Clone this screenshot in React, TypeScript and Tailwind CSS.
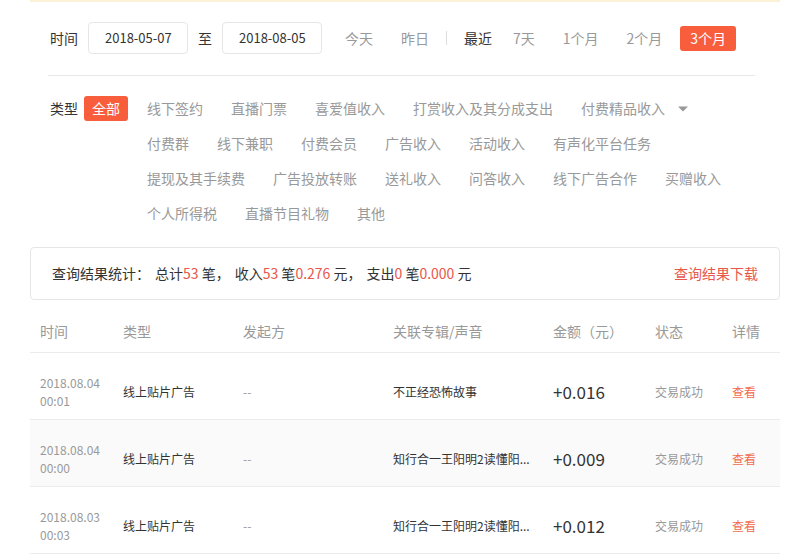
import { useState } from "react";

const FONT = { fontFamily: '"Noto Sans CJK SC", "Noto Sans", sans-serif' };

const TYPE_ROWS = [
  ["线下签约", "直播门票", "喜爱值收入", "打赏收入及其分成支出", "付费精品收入"],
  ["付费群", "线下兼职", "付费会员", "广告收入", "活动收入", "有声化平台任务"],
  ["提现及其手续费", "广告投放转账", "送礼收入", "问答收入", "线下广告合作", "买赠收入"],
  ["个人所得税", "直播节目礼物", "其他"],
];

const ROWS = [
  { date: "2018.08.04", time: "00:01", type: "线上贴片广告", from: "--", album: "不正经恐怖故事", amount: "+0.016" },
  { date: "2018.08.04", time: "00:00", type: "线上贴片广告", from: "--", album: "知行合一王阳明2读懂阳...", amount: "+0.009" },
  { date: "2018.08.03", time: "00:03", type: "线上贴片广告", from: "--", album: "知行合一王阳明2读懂阳...", amount: "+0.012" },
];

const COLS = "grid grid-cols-[83px_120px_150px_160px_102px_77px_1fr] items-center pl-[10px]";

export default function App() {
  const [range, setRange] = useState("3个月");

  return (
    <div className="w-[811px] h-[555px] bg-white overflow-hidden text-[#333]" style={FONT}>
      <div className="ml-[30px] w-[750px] h-[2px] bg-[#fbf1d6]" />

      {/* 筛选 */}
      <div className="ml-[48px] w-[707px]">
        <div className="flex items-center mt-[20px] h-[32px] pl-[2px]">
          <span className="text-[14px] w-[38px]">时间</span>
          <div className="w-[100px] h-[32px] border border-[#e6e6e6] rounded-[4px] flex items-center pl-[16px] text-[13px]">
            2018-05-07
          </div>
          <span className="text-[14px] mx-[10px]">至</span>
          <div className="w-[100px] h-[32px] border border-[#e6e6e6] rounded-[4px] flex items-center pl-[16px] text-[13px]">
            2018-08-05
          </div>
          <span className="ml-[23px] text-[14px] text-[#999]">今天</span>
          <span className="ml-[28px] text-[14px] text-[#999]">昨日</span>
          <span className="mx-[17px] w-px h-[14px] bg-[#ddd]" />
          <span className="text-[14px] text-[#333]">最近</span>
          <div className="flex items-center ml-[21px] gap-[28px]">
            {["7天", "1个月", "2个月"].map((r) => (
              <button key={r} onClick={() => setRange(r)} className="text-[14px] text-[#999]">
                {r}
              </button>
            ))}
          </div>
          <button
            onClick={() => setRange("3个月")}
            className={`ml-[18px] h-[25px] px-[10px] rounded-[3px] text-[14px] ${
              range === "3个月" ? "bg-[#f95e3c] text-white" : "text-[#999]"
            }`}
          >
            3个月
          </button>
        </div>

        <div className="mt-[21px] h-px bg-[#e8e8e8]" />

        <div className="flex mt-[15px] pl-[2px]">
          <div className="w-[97px] h-[35px] flex items-center shrink-0">
            <span className="text-[14px] mr-[6px]">类型</span>
            <span className="h-[25px] px-[8px] rounded-[3px] bg-[#f95e3c] text-white text-[14px] flex items-center">
              全部
            </span>
          </div>
          <div className="flex flex-col">
            {TYPE_ROWS.map((row, i) => (
              <div key={i} className="h-[35px] flex items-center gap-[28px]">
                {row.map((t) => (
                  <span key={t} className="text-[14px] text-[#999] whitespace-nowrap">
                    {t}
                  </span>
                ))}
                {i === 0 && (
                  <svg width="12" height="8" viewBox="0 0 12 8" className="-ml-[16px]">
                    <path d="M1 1.5h10L6 6.5z" fill="#999" />
                  </svg>
                )}
              </div>
            ))}
          </div>
        </div>
      </div>

      {/* 统计 */}
      <div className="ml-[30px] w-[750px] mt-[16px] h-[53px] border border-[#e6e6e6] rounded-[4px] flex items-center justify-between pl-[21px] pr-[21px] text-[14px]">
        <div className="whitespace-nowrap">
          查询结果统计：
          <span className="ml-[5px]">总计</span>
          <span className="text-[#e8574b]">53</span> 笔，
          <span className="ml-[5px]">收入</span>
          <span className="text-[#e8574b]">53</span> 笔<span className="text-[#e8574b]">0.276</span> 元，
          <span className="ml-[5px]">支出</span>
          <span className="text-[#e8574b]">0</span> 笔<span className="text-[#e8574b]">0.000</span> 元
        </div>
        <span className="text-[#e8574b] text-[14px]">查询结果下载</span>
      </div>

      {/* 表格 */}
      <div className="ml-[30px] w-[750px] mt-[10px]">
        <div className={`${COLS} h-[43px] border-b border-[#ececec] text-[14px] text-[#999]`}>
          <span>时间</span>
          <span>类型</span>
          <span>发起方</span>
          <span>关联专辑/声音</span>
          <span>金额（元）</span>
          <span>状态</span>
          <span>详情</span>
        </div>
        {ROWS.map((r, i) => (
          <div
            key={i}
            className={`${COLS} h-[67px] pt-[11px] border-b border-[#ececec] ${i === 1 ? "bg-[#fafafa]" : ""}`}
          >
            <div className="text-[12px] leading-[18px] text-[#999]">
              <div>{r.date}</div>
              <div>{r.time}</div>
            </div>
            <span className="text-[12px] text-[#333]">{r.type}</span>
            <span className="text-[12px] text-[#999]">{r.from}</span>
            <span className="text-[12px] text-[#333] whitespace-nowrap">{r.album}</span>
            <span className="text-[17px] text-[#333]">{r.amount}</span>
            <span className="text-[12px] text-[#999]">交易成功</span>
            <span className="text-[12px] text-[#f26b4f]">查看</span>
          </div>
        ))}
      </div>
    </div>
  );
}
